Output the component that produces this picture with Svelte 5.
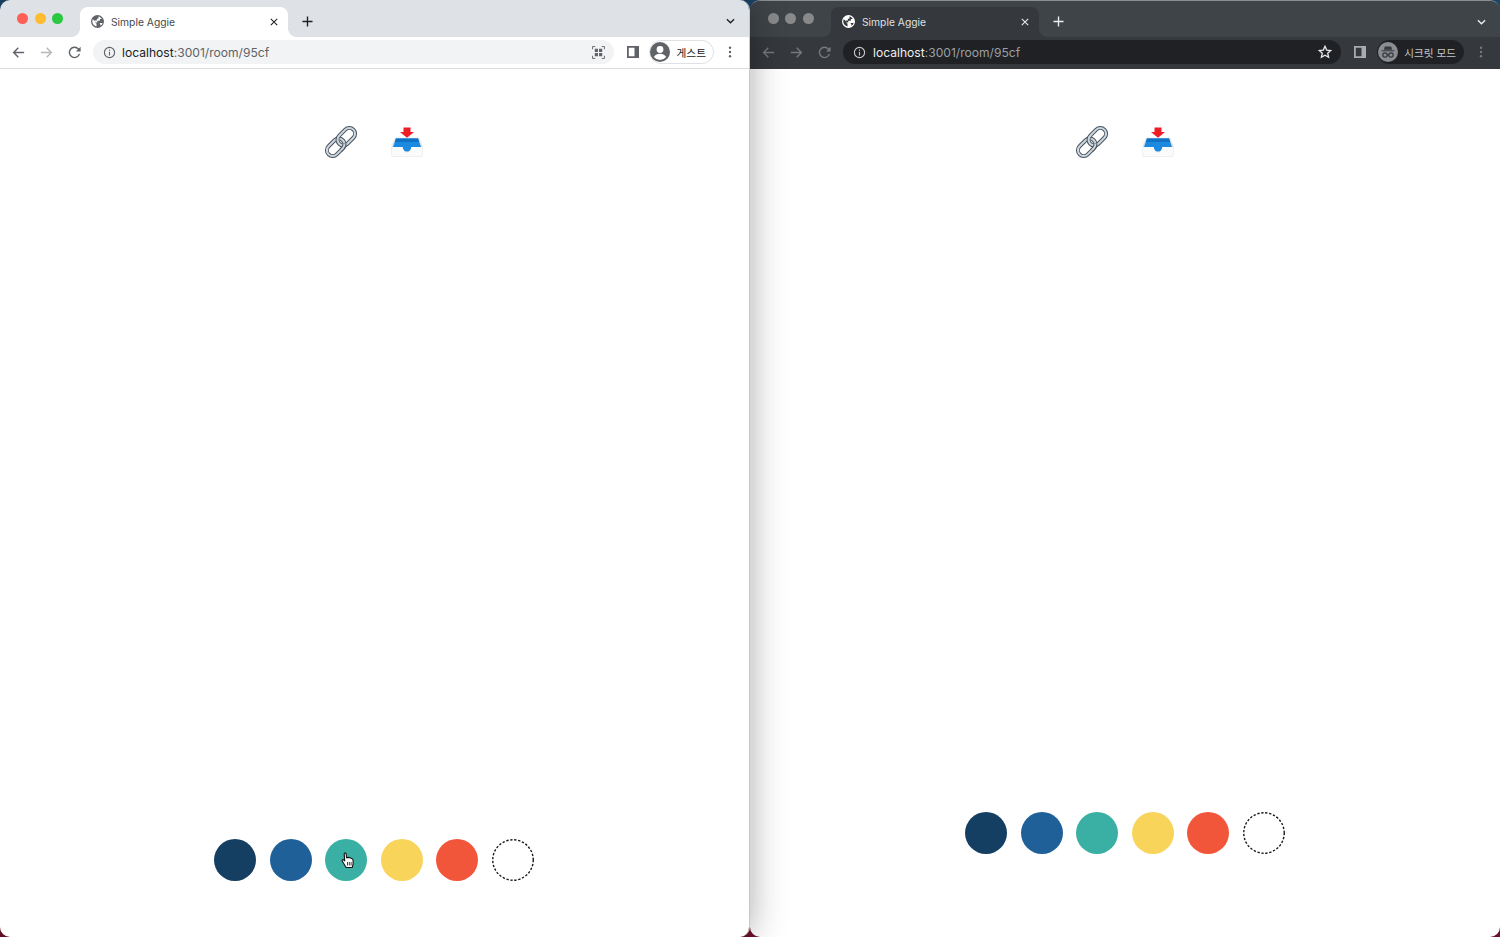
<script lang="ts">
  const colors = ['#143f62', '#1f6099', '#3aafa3', '#f8d45b', '#f2563a'];
</script>

{#snippet globe()}
  <svg class="favicon" viewBox="0 0 16 16" aria-hidden="true">
    <circle cx="8" cy="8" r="8" fill="currentColor" />
    <path class="land" d="M2.2 5.2 5.6 8.4v.9c0 .7.6 1.2 1.2 1.2v3.6C4 13.6 1.6 11.1 1.6 8c0-1 .2-1.9.6-2.8Zm7-3.4c1.8.4 3.3 1.600 4.200 3.200h-1.900c-.4 0-.7.3-.7.7v1.500H8.400c-.4 0-.7.3-.7.7v1.200H6.300L4.500 6.800h2.700V4.700h1.300c.4 0 .7-.3.7-.7V1.800Zm2.300 8h1.600c.5 0 .9.2 1.200.5-.5 1.300-1.500 2.400-2.800 3v-1.900c-.5-.2-.9-.6-.9-1.100 0-.3.4-.5.900-.5Z" />
  </svg>
{/snippet}

{#snippet back()}
  <svg viewBox="0 0 16 16" aria-hidden="true"><path d="M14 8H3M7.800 3 2.800 8l5 5" /></svg>
{/snippet}

{#snippet forward()}
  <svg viewBox="0 0 16 16" aria-hidden="true"><path d="M2 8h11M8.200 3l5 5-5 5" /></svg>
{/snippet}

{#snippet reload()}
  <svg viewBox="0 0 16 16" aria-hidden="true">
    <path d="M13.300 9.500A5.500 5.500 0 1 1 12.200 4.300L13.800 6" />
    <path class="solid" d="M14.500 1.800v5h-5Z" />
  </svg>
{/snippet}

{#snippet info()}
  <svg class="info" viewBox="0 0 14 14" aria-hidden="true">
    <circle cx="7" cy="7" r="5.500" />
    <path d="M7 6.300v3.800M7 3.800v1.400" />
  </svg>
{/snippet}

{#snippet sidePanel()}
  <svg class="panel" viewBox="0 0 12 12" aria-hidden="true">
    <path class="solid" fill-rule="evenodd" d="M0 0h12v12H0Zm1.800 1.800v8.400h5.700V1.800Z" />
  </svg>
{/snippet}

{#snippet dots()}
  <svg class="dots" viewBox="0 0 4 14" aria-hidden="true">
    <circle cx="2" cy="2" r="1.400" />
    <circle cx="2" cy="7" r="1.400" />
    <circle cx="2" cy="12" r="1.400" />
  </svg>
{/snippet}

{#snippet tabBar(lights: boolean)}
  <div class="strip">
    <div class="lights" class:off={!lights}><i></i><i></i><i></i></div>
    <div class="tab">
      {@render globe()}
      <span class="title">Simple Aggie</span>
      <svg class="close" viewBox="0 0 10 10" aria-hidden="true"><path d="M1 1l8 8M9 1 1 9" /></svg>
    </div>
    <svg class="plus" viewBox="0 0 12 12" aria-hidden="true"><path d="M6 .5v11M.5 6h11" /></svg>
    <svg class="chevron" viewBox="0 0 10 6" aria-hidden="true"><path d="M1 1l4 4 4-4" /></svg>
  </div>
{/snippet}

{#snippet url()}
  <span class="url"><b>localhost</b>:3001/room/95cf</span>
{/snippet}

{#snippet content()}
  <main class="page">
    <div class="actions">
      <button aria-label="Copy link">
        <svg viewBox="0 0 34 34" aria-hidden="true">
          <g fill="none">
            <rect class="ring-out" x="1.700" y="16.550" width="20" height="11.500" rx="5.750" transform="rotate(-45 11.700 22.300)" />
            <rect class="ring-in" x="1.700" y="16.550" width="20" height="11.500" rx="5.750" transform="rotate(-45 11.700 22.300)" />
            <rect class="ring-out" x="12.300" y="5.950" width="20" height="11.500" rx="5.750" transform="rotate(-45 22.300 11.700)" />
            <rect class="ring-in" x="12.300" y="5.950" width="20" height="11.500" rx="5.750" transform="rotate(-45 22.300 11.700)" />
            <path class="ring-out" d="M16.800 25.300 18.770 23.370A5.750 5.750 0 0 0 20.390 18.500" />
            <path class="ring-in" d="M16.800 25.300 18.770 23.370A5.750 5.750 0 0 0 20.390 18.500" />
          </g>
        </svg>
      </button>
      <button aria-label="Download">
        <svg viewBox="0 0 34 34" aria-hidden="true">
          <path d="M1.500 21 5 12.800h24l3.500 8.200v9a2 2 0 0 1-2 2h-27a2 2 0 0 1-2-2Z" fill="#dfe2e6" />
          <path d="M6 13.600h22L31 22h-9.500q-1 4.500-4.500 4.500T12.500 22H3Z" fill="#1b8ae0" />
          <path d="M6 13.600h22l1.200 3.400H4.800Z" fill="#0f72c4" />
          <path d="M2 22h10.500q1 5.500 4.500 5.500t4.500-5.500H32v8a1.400 1.400 0 0 1-1.400 1.400H3.400A1.400 1.400 0 0 1 2 30Z" fill="#fbfbfc" />
          <path d="M13.500 2.500h7V7H24l-7 5.800L10 7h3.500Z" fill="#ee1c25" />
        </svg>
      </button>
    </div>
    <div class="swatches">
      {#each colors as color, i}
        <button class="swatch" style:background={color} aria-label="Color {i + 1}"></button>
      {/each}
      <button class="swatch" aria-label="No color">
        <svg class="ring" viewBox="0 0 42 42" aria-hidden="true">
          <circle cx="21" cy="21" r="20.250" />
        </svg>
      </button>
    </div>
  </main>
{/snippet}

<div class="desktop">
  <section class="window light">
    {@render tabBar(true)}
    <div class="toolbar">
      <span class="nav">{@render back()}</span>
      <span class="nav faded">{@render forward()}</span>
      <span class="nav">{@render reload()}</span>
      <div class="omnibox">
        {@render info()}
        {@render url()}
        <svg class="qr" viewBox="0 0 14 14" aria-hidden="true">
          <path d="M.6 3.500V.6h2.900M10.500.6h2.900v2.900M13.400 10.500v2.900h-2.900M3.500 13.400H.6v-2.900" />
          <path class="solid" d="M3 3h3.400v3.400H3Zm4.600 0H11v3.400H7.600ZM3 7.600h3.400V11H3Zm4.600 0H11V11H7.600Z" />
        </svg>
      </div>
      <span class="nav side">{@render sidePanel()}</span>
      <div class="chip">
        <svg class="avatar" viewBox="0 0 20 20" aria-hidden="true">
          <circle cx="10" cy="10" r="10" fill="#5f6368" />
          <circle cx="10" cy="7.500" r="3.400" fill="#fff" />
          <path d="M3.800 15c1.400-2.200 3.700-3.200 6.200-3.200s4.800 1 6.200 3.200a8 8 0 0 1-12.400 0Z" fill="#fff" />
        </svg>
        <span class="chip-label">게스트</span>
      </div>
      <span class="nav menu">{@render dots()}</span>
    </div>
    {@render content()}
    <svg class="cursor" viewBox="0 0 14 17" aria-hidden="true">
      <path d="M3.200 1.800c0-1.100 1.900-1.100 2 0l.3 4 1.700-.4 1.700.4 1.800.6c1 .4 1.400 1 1.400 2v3.400L11.300 15.500H5.200L1.300 9.300c-.7-1.100.5-2.100 1.500-1.300l.9.800Z" fill="#fff" stroke="#111" stroke-width="1.100" stroke-linejoin="round" />
      <path d="M6.500 10v3.500M8.300 10v3.500M10.100 10v3.500" stroke="#111" stroke-width=".8" />
    </svg>
  </section>

  <section class="window dark">
    {@render tabBar(false)}
    <div class="toolbar">
      <span class="nav faded">{@render back()}</span>
      <span class="nav faded">{@render forward()}</span>
      <span class="nav faded">{@render reload()}</span>
      <div class="omnibox">
        {@render info()}
        {@render url()}
        <svg class="star" viewBox="0 0 14 14" aria-hidden="true">
          <path d="M7 1.300 8.700 5.100l4.100.4-3.100 2.700.9 4.100L7 10.200l-3.600 2.100.9-4.100L1.200 5.500l4.100-.4Z" />
        </svg>
      </div>
      <span class="nav side">{@render sidePanel()}</span>
      <div class="chip">
        <svg class="avatar" viewBox="0 0 20 20" aria-hidden="true">
          <circle cx="10" cy="10" r="10" fill="#8b8d90" />
          <path d="M6.800 4.600h6.400l.9 3.200H5.900Z M3.800 8.300h12.400v1H3.800Z" fill="#35383c" />
          <g fill="none" stroke="#35383c" stroke-width="1.200">
            <circle cx="7" cy="13" r="2.200" />
            <circle cx="13" cy="13" r="2.200" />
            <path d="M9.200 12.800h1.600" />
          </g>
        </svg>
        <span class="chip-label">시크릿 모드</span>
      </div>
      <span class="nav menu faded">{@render dots()}</span>
    </div>
    {@render content()}
  </section>
</div>

<style>
  :global(body) {
    background: #1d2b45;
  }

  .desktop {
    background: linear-gradient(#1e4468, #1e4468 20%, #6b1128 80%);
    display: flex;
    height: 100vh;
    overflow: hidden;
  }

  .window {
    border-radius: 10px;
    box-sizing: border-box;
    display: flex;
    flex-direction: column;
    font-family: Inter, 'Noto Sans CJK KR', sans-serif;
    overflow: hidden;
    position: relative;
    width: 750px;
  }

  .light {
    --strip: #dee1e6;
    --bar: #fff;
    --omni: #f1f3f4;
    --ink: #5f6368;
    --strong: #202124;
    --chip-line: #dfe1e5;
    --chip-bg: transparent;
    --rule: #dadce0;
    --swatch-bottom: 56px;
    border-right: 1px solid #c9c9cb;
    box-shadow: 0 0 36px rgba(0, 0, 0, 0.34);
    z-index: 1;
  }

  .dark {
    --strip: #3f4448;
    --bar: #35383c;
    --omni: #202124;
    --ink: #c4c7ca;
    --strong: #eceef0;
    --chip-line: #202124;
    --chip-bg: #202124;
    --rule: #35383c;
    --swatch-bottom: 83px;
    border-top: 1px solid #8c8f92;
  }

  .strip {
    align-items: flex-end;
    background: var(--strip);
    display: flex;
    flex: none;
    height: 37px;
    padding-right: 14px;
  }

  .dark .strip {
    height: 36px;
  }

  .lights {
    align-items: center;
    align-self: flex-start;
    box-sizing: border-box;
    display: flex;
    gap: 6.500px;
    margin-top: 12.500px;
    padding-left: 17px;
    width: 80px;
  }

  .dark .lights {
    margin-top: 11.500px;
    padding-left: 17.500px;
    width: 81px;
  }

  .lights i {
    background: #fe5f57;
    border-radius: 50%;
    height: 11px;
    width: 11px;
  }

  .lights i:nth-child(2) {
    background: #febc2e;
  }

  .lights i:nth-child(3) {
    background: #28c840;
  }

  .lights.off i {
    background: #88898b;
  }

  .tab {
    align-items: center;
    background: var(--bar);
    border-radius: 8px 8px 0 0;
    box-sizing: border-box;
    display: flex;
    height: 30px;
    padding: 0 10px 1px 11px;
    position: relative;
    width: 208px;
  }

  .tab::before,
  .tab::after {
    bottom: 0;
    content: '';
    height: 8px;
    position: absolute;
    width: 8px;
  }

  .tab::before {
    background: radial-gradient(circle at 0 0, transparent 7.500px, var(--bar) 8px);
    left: -8px;
  }

  .tab::after {
    background: radial-gradient(circle at 100% 0, transparent 7.500px, var(--bar) 8px);
    right: -8px;
  }

  .favicon {
    color: var(--ink);
    flex: none;
    height: 13px;
    width: 13px;
  }

  .dark .favicon {
    color: #fff;
  }

  .land {
    fill: var(--bar);
  }

  .title {
    color: #45484d;
    flex: 1;
    font-size: 10.300px;
    margin-left: 7px;
  }

  .dark .title {
    color: #dfe1e4;
  }

  .close {
    fill: none;
    height: 8px;
    stroke: var(--strong);
    stroke-width: 1.300;
    width: 8px;
  }

  .plus {
    align-self: center;
    fill: none;
    height: 11px;
    margin: 5px 0 0 14px;
    stroke: var(--strong);
    stroke-width: 1.500;
    width: 11px;
  }

  .chevron {
    align-self: center;
    fill: none;
    height: 6px;
    margin: 5px 0 0 auto;
    stroke: var(--strong);
    stroke-width: 1.500;
    width: 9px;
  }

  .toolbar {
    align-items: center;
    background: var(--bar);
    border-bottom: 1px solid var(--rule);
    box-sizing: border-box;
    display: flex;
    flex: none;
    height: 32px;
    padding: 0 5px 1px 4px;
  }

  .nav {
    align-items: center;
    color: var(--ink);
    display: flex;
    flex: none;
    justify-content: center;
    width: 28px;
  }

  .nav svg {
    fill: none;
    height: 15px;
    stroke: currentColor;
    stroke-width: 1.500;
    width: 15px;
  }

  .nav.faded {
    opacity: 0.45;
  }

  .nav .solid,
  .qr .solid {
    fill: currentColor;
    stroke: none;
  }

  .nav .panel {
    height: 12px;
    width: 12px;
  }

  .nav .dots {
    fill: currentColor;
    height: 12px;
    stroke: none;
    width: 4px;
  }

  .omnibox {
    align-items: center;
    background: var(--omni);
    border-radius: 12px;
    display: flex;
    flex: 1;
    height: 24px;
    margin-left: 5px;
    padding: 0 9px 0 10px;
  }

  .dark .omnibox {
    padding-left: 9.500px;
  }

  .info {
    fill: none;
    flex: none;
    height: 13px;
    stroke: var(--ink);
    stroke-width: 1.200;
    width: 13px;
  }

  .url {
    color: var(--ink);
    font-size: 12.100px;
    margin-left: 6px;
  }

  .dark .url {
    color: #9aa0a6;
    margin-left: 7.500px;
  }

  .url b {
    color: var(--strong);
    font-weight: 400;
  }

  .qr {
    color: var(--ink);
    fill: none;
    height: 13px;
    margin-left: auto;
    stroke: currentColor;
    stroke-width: 1;
    width: 13px;
  }

  .star {
    fill: none;
    height: 14px;
    margin-left: auto;
    stroke: #e8eaed;
    stroke-width: 1.300;
    width: 14px;
  }

  .side {
    margin-left: 5px;
  }

  .dark .side {
    color: #a9acaf;
  }

  .chip {
    align-items: center;
    background: var(--chip-bg);
    border: 1px solid var(--chip-line);
    border-radius: 12px;
    box-sizing: border-box;
    display: flex;
    flex: none;
    gap: 7px;
    height: 24px;
    margin-left: 2px;
    padding: 0 7px 0 0;
  }

  .dark .chip {
    gap: 6px;
    margin-left: 3px;
  }

  .avatar {
    flex: none;
    height: 20px;
    width: 20px;
  }

  .chip-label {
    color: var(--strong);
    font-size: 10.700px;
    white-space: nowrap;
  }

  .dark .chip-label {
    color: #c4c7ca;
    font-size: 10.600px;
  }

  .menu {
    margin-left: 2px;
  }

  .dark .menu {
    margin-left: 3px;
  }

  .page {
    align-items: center;
    background: #fff;
    display: flex;
    flex: 1;
    flex-direction: column;
    justify-content: space-between;
    padding: 56px 0 var(--swatch-bottom);
  }

  .light .page {
    padding-right: 1px;
  }

  .actions {
    display: flex;
    gap: 32px;
  }

  button {
    background: none;
    border: 0;
    cursor: pointer;
    padding: 0;
  }

  .actions button,
  .actions svg {
    display: block;
    height: 34px;
    width: 34px;
  }

  .ring-out {
    stroke: #47525d;
    stroke-width: 4;
  }

  .ring-in {
    stroke: #ccd6de;
    stroke-width: 2.100;
  }

  .swatches {
    display: flex;
    gap: 13.600px;
  }

  .swatch {
    border-radius: 50%;
    height: 42px;
    width: 42px;
  }

  .ring {
    display: block;
    fill: none;
    height: 42px;
    stroke: #1a1a1a;
    stroke-dasharray: 2.300 1.700;
    stroke-width: 1.400;
    width: 42px;
  }

  .cursor {
    bottom: 68px;
    height: 17px;
    left: 341px;
    position: absolute;
    width: 14px;
    z-index: 1;
  }
</style>
